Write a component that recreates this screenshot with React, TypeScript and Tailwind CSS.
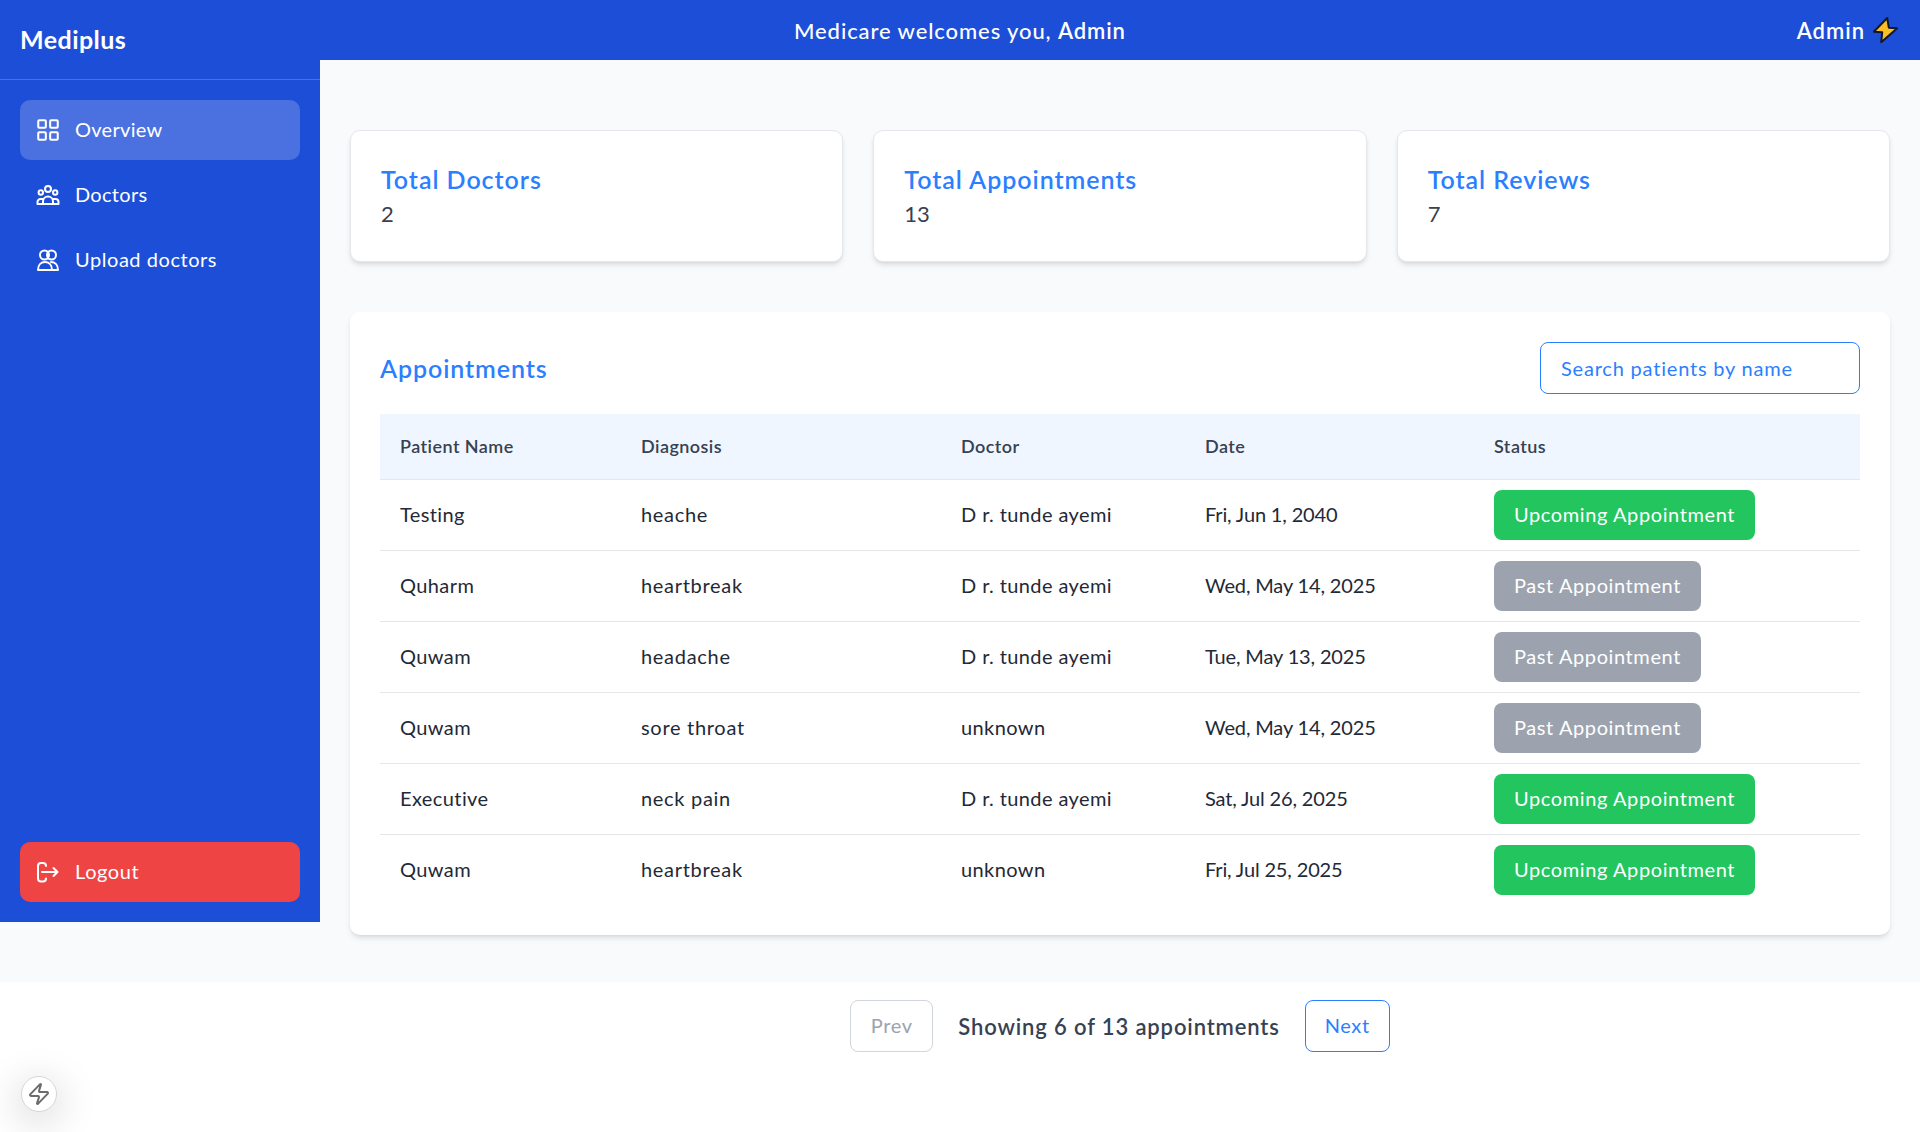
import { LayoutGrid, Zap } from 'lucide-react';

const rows = [
  { name: 'Testing', diagnosis: 'heache', doctor: 'D r. tunde ayemi', date: 'Fri, Jun 1, 2040', upcoming: true },
  { name: 'Quharm', diagnosis: 'heartbreak', doctor: 'D r. tunde ayemi', date: 'Wed, May 14, 2025', upcoming: false },
  { name: 'Quwam', diagnosis: 'headache', doctor: 'D r. tunde ayemi', date: 'Tue, May 13, 2025', upcoming: false },
  { name: 'Quwam', diagnosis: 'sore throat', doctor: 'unknown', date: 'Wed, May 14, 2025', upcoming: false },
  { name: 'Executive', diagnosis: 'neck pain', doctor: 'D r. tunde ayemi', date: 'Sat, Jul 26, 2025', upcoming: true },
  { name: 'Quwam', diagnosis: 'heartbreak', doctor: 'unknown', date: 'Fri, Jul 25, 2025', upcoming: true },
];

const stats = [
  { label: 'Total Doctors', value: 2 },
  { label: 'Total Appointments', value: 13 },
  { label: 'Total Reviews', value: 7 },
];

function DoctorsIcon() {
  return (
    <svg viewBox="-1 -1 26 26" fill="none" stroke="currentColor" strokeWidth="2" strokeLinecap="round" strokeLinejoin="round" className="size-[26px] shrink-0">
      <circle cx="12" cy="6" r="3" />
      <circle cx="4.8" cy="9.5" r="2.2" />
      <circle cx="19.2" cy="9.5" r="2.2" />
      <path d="M1.5 21h21M7 21v-2.5a5 5 0 0 1 10 0V21M1.5 21v-2a3 3 0 0 1 3-3h2M22.5 21v-2a3 3 0 0 0-3-3h-2" />
    </svg>
  );
}

function UploadIcon() {
  return (
    <svg viewBox="-1 -1 26 26" fill="none" stroke="currentColor" strokeWidth="2" strokeLinecap="round" strokeLinejoin="round" className="size-[26px] shrink-0">
      <circle cx="8.5" cy="7" r="4.5" />
      <circle cx="15.5" cy="7" r="4.5" />
      <path d="M2 22h20M2 22c0-5 3-8 7-8s7 3 7 8M15 14c4 0 7 3 7 8" />
    </svg>
  );
}

function LogoutIcon() {
  return (
    <svg viewBox="-1 -1 26 26" fill="none" stroke="currentColor" strokeWidth="2" strokeLinecap="round" strokeLinejoin="round" className="size-[26px] shrink-0">
      <path d="M10 6a3 3 0 0 0-3-3H5a3 3 0 0 0-3 3v12.5a3 3 0 0 0 3 3h2a3 3 0 0 0 3-3" />
      <path d="M6 12h15.5M17.5 8l4 4-4 4" />
    </svg>
  );
}

function Sidebar() {
  return (
    <aside className="flex h-[922px] w-[320px] shrink-0 flex-col bg-[#1d4ed8] text-white">
      <div className="flex h-[80px] items-center border-b border-white/20 pl-5 text-[25px] font-bold tracking-[0.45px]">Mediplus</div>
      <nav className="flex flex-1 flex-col gap-[5px] p-5">
        <a className="flex h-[60px] items-center gap-[14px] rounded-[10px] bg-white/20 px-[15px] text-[20px] tracking-[0.3px]">
          <LayoutGrid size={26} strokeWidth={1.9} />
          <span className="pb-[2px]">Overview</span>
        </a>
        <a className="flex h-[60px] items-center gap-[14px] rounded-[10px] px-[15px] text-[20px] tracking-[0.3px]">
          <DoctorsIcon />
          <span className="pb-[2px]">Doctors</span>
        </a>
        <a className="flex h-[60px] items-center gap-[14px] rounded-[10px] px-[15px] text-[20px] tracking-[0.55px]">
          <UploadIcon />
          <span className="pb-[2px]">Upload doctors</span>
        </a>
        <button className="mt-auto flex h-[60px] items-center gap-[14px] rounded-[10px] bg-[#ef4444] px-[15px] text-[20px] tracking-[0.6px]">
          <LogoutIcon />
          <span className="pb-[2px]">Logout</span>
        </button>
      </nav>
    </aside>
  );
}

function Badge({ upcoming }: { upcoming: boolean }) {
  return (
    <span
      className={`inline-flex h-[50px] items-center rounded-lg px-5 pb-[2px] text-[20px] tracking-[0.6px] text-white ${
        upcoming ? 'bg-[#22c55e]' : 'bg-[#9ca3af]'
      }`}
    >
      {upcoming ? 'Upcoming Appointment' : 'Past Appointment'}
    </span>
  );
}

export default function App() {
  return (
    <div className="min-h-[1132px] bg-white font-['Lato',sans-serif] text-[#1f2937]">
      <div className="flex h-[982px] bg-[#f9fafb]">
        <Sidebar />
        <div className="flex min-w-0 flex-1 flex-col">
          <header className="flex h-[60px] items-center justify-between bg-[#1d4ed8] pr-[21px] pl-[474px] text-[22px] text-white">
            <p className="font-medium tracking-[0.9px]">
              Medicare welcomes you, <span className="font-semibold">Admin</span>
            </p>
            <div className="flex items-center gap-2 font-semibold tracking-[1px]">
              Admin
              <svg viewBox="0 0 26 26" className="size-[26px]" fill="#fbbf24" stroke="#111827" strokeWidth="2" strokeLinejoin="round">
                <path d="M14.2 1 0.8 14.7 9.2 15.3 8.2 25.3 24.2 11.3 15.8 10.7Z" />
              </svg>
            </div>
          </header>
          <main className="flex flex-col gap-[50px] px-[30px] pt-[70px]">
            <div className="grid grid-cols-3 gap-[30px]">
              {stats.map(stat => (
                <div key={stat.label} className="h-[132px] rounded-[10px] border border-gray-200 bg-white px-[30px] pt-[30px] shadow-md">
                  <h2 className="text-[25px] leading-[36px] font-semibold tracking-[0.95px] text-[#2b7fff]">{stat.label}</h2>
                  <p className="text-[22px] leading-[34px] text-[#374151]">{stat.value}</p>
                </div>
              ))}
            </div>
            <section className="rounded-[10px] bg-white p-[30px] shadow-md">
              <div className="mb-5 flex items-center justify-between">
                <h2 className="pt-[2px] text-[25px] font-semibold tracking-[0.9px] text-[#2b7fff]">Appointments</h2>
                <input
                  placeholder="Search patients by name"
                  className="h-[52px] w-[320px] rounded-lg border border-[#2b7fff] px-5 pb-[1px] text-[20px] tracking-[0.8px] outline-none placeholder:text-[#2b7fff]"
                />
              </div>
              <table className="w-full table-fixed text-left">
                <thead>
                  <tr className="h-[65px] border-b border-gray-200 bg-[#eff6ff] text-[18px] tracking-[0.45px] text-[#374151]">
                    <th className="w-[241px] pl-5 font-semibold">Patient Name</th>
                    <th className="w-[320px] pl-5 font-semibold">Diagnosis</th>
                    <th className="w-[244px] pl-5 font-semibold">Doctor</th>
                    <th className="w-[289px] pl-5 font-semibold">Date</th>
                    <th className="pl-5 font-semibold">Status</th>
                  </tr>
                </thead>
                <tbody className="text-[20px]">
                  {rows.map((row, i) => (
                    <tr key={i} className="h-[71px] border-b border-gray-200 last:border-b-0">
                      <td className="pb-[2px] pl-5 tracking-[0.4px]">{row.name}</td>
                      <td className="pb-[2px] pl-5 tracking-[0.7px]">{row.diagnosis}</td>
                      <td className="pb-[2px] pl-5 tracking-[0.4px]">{row.doctor}</td>
                      <td className="pb-[2px] pl-5 tracking-[-0.15px]">{row.date}</td>
                      <td className="pl-5">
                        <Badge upcoming={row.upcoming} />
                      </td>
                    </tr>
                  ))}
                </tbody>
              </table>
            </section>
          </main>
        </div>
      </div>
      <footer className="flex justify-center pt-[18px] pl-[320px]">
        <div className="flex items-center gap-[25px]">
          <button className="h-[52px] w-[83px] rounded-lg border border-gray-300 pb-[2px] text-[20px] tracking-[0.6px] text-[#9ca3af]">Prev</button>
          <span className="text-[22px] font-semibold tracking-[0.87px] text-[#374151]">Showing 6 of 13 appointments</span>
          <button className="h-[52px] w-[85px] rounded-lg border border-[#2b7fff] pb-[2px] text-[20px] tracking-[0.6px] text-[#2b7fff]">Next</button>
        </div>
      </footer>
      <div className="fixed top-[1076px] left-[21px] flex size-[36px] items-center justify-center rounded-full border border-gray-300 bg-white text-[#6b6b6b] shadow-[0_8px_40px_rgba(0,0,0,0.22)]">
        <Zap size={24} strokeWidth={2} />
      </div>
    </div>
  );
}
